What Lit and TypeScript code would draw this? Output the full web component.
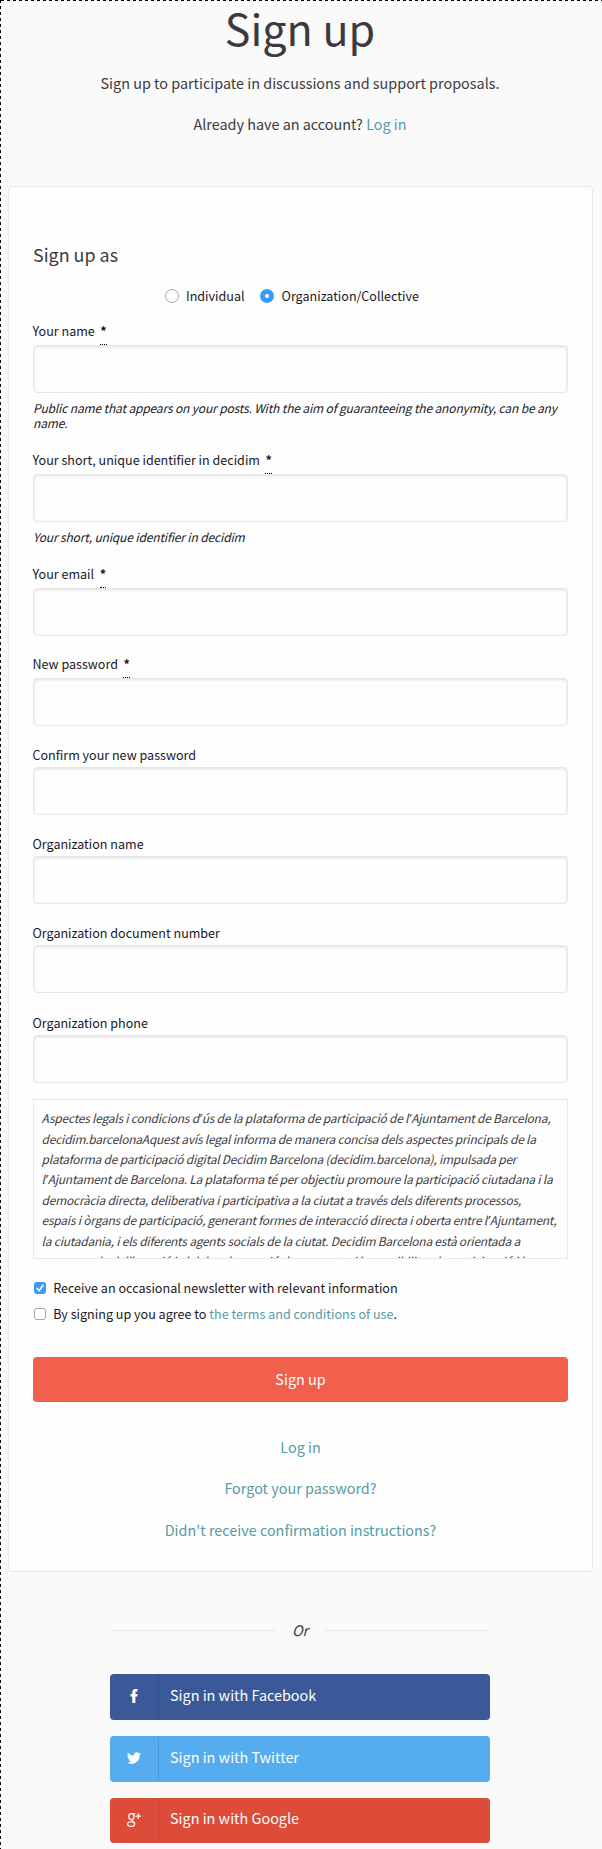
import { LitElement, html, css, svg } from "lit";
import { customElement, property } from "lit/decorators.js";

const base = css`
  * { box-sizing: border-box; }
  a { color: #569ba5; text-decoration: none; }
`;

@customElement("text-field")
class TextField extends LitElement {
  @property() label = "";
  @property({ type: Boolean }) required = false;
  @property() help = "";
  static styles = [base, css`
    :host { display: block; }
    .label { display: flex; gap: 5.5px; height: 24px; margin-left: -.5px; font-size: 12.56px; line-height: 23px; color: #1a181d; white-space: pre; }
    .required .label { height: 26px; line-height: 24px; }
    .star { font-weight: 700; height: 26px; border-bottom: 1px dotted #000; }
    .box { display: block; width: 100%; height: 48px; margin: 0; border: 1px solid #e8e8e8; border-radius: 4px; background: #fefefe; box-shadow: inset 0 1px 3px rgba(10,10,10,.13); outline: none; }
    .help { padding: 7px 0 2px; font-size: 12px; letter-spacing: -.15px; line-height: 15px; font-style: italic; color: #1a181d; white-space: pre-line; }
  `];
  render() {
    return html`<div class=${this.required ? "required" : ""}>
      <label class="label"><span>${this.label}</span>${this.required ? html`<span class="star">*</span>` : ""}</label>
      <input class="box" />
      ${this.help ? html`<div class="help">${this.help}</div>` : ""}
    </div>`;
  }
}

const facebook = svg`<path d="M6 16V8.600H4V5.800h2V4C6 1.300 7.300 0 9.700 0H12v2.800h-1.300c-.9 0-1.100.4-1.100 1.100v1.900H12l-.3 2.800H9.600V16z"/>`;
const twitter = svg`<path d="M16 3a6.600 6.600 0 0 1-1.900.500A3.300 3.300 0 0 0 15.500 1.700a6.600 6.600 0 0 1-2.100.8A3.300 3.300 0 0 0 7.800 5.500 9.300 9.300 0 0 1 1.100 2.100a3.300 3.300 0 0 0 1 4.400 3.300 3.300 0 0 1-1.500-.4c0 1.600 1.100 2.900 2.600 3.200a3.300 3.300 0 0 1-1.500.1 3.300 3.300 0 0 0 3.100 2.300A6.600 6.600 0 0 1 0 13.100 9.300 9.300 0 0 0 14.400 4.700 6.600 6.600 0 0 0 16 3z"/>`;
const google = svg`<g fill="none" stroke="#fefefe" stroke-width="1.400"><ellipse cx="5" cy="4.100" rx="3" ry="3.400"/><ellipse cx="4.700" cy="12.700" rx="4" ry="2.700"/><path d="M5.500.7H9.400M5.600 7.400C3.800 8.800 8.700 9.200 8.700 12.300"/><path d="M9.700 3.600H16M12.850.4V6.800"/></g>`;

const TERMS = `Aspectes legals i condicions d’ús de la plataforma de participació de l’Ajuntament de Barcelona,
decidim.barcelonaAquest avís legal informa de manera concisa dels aspectes principals de la
plataforma de participació digital Decidim Barcelona (decidim.barcelona), impulsada per
l’Ajuntament de Barcelona. La plataforma té per objectiu promoure la participació ciutadana i la
democràcia directa, deliberativa i participativa a la ciutat a través dels diferents processos,
espais i òrgans de participació, generant formes de interacció directa i oberta entre l’Ajuntament,
la ciutadania, i els diferents agents socials de la ciutat. Decidim Barcelona està orientada a
promoure la deliberació i el debat, la creació de propostes i la possibilitat de participació i la`;

@customElement("app-root")
class AppRoot extends LitElement {
  static styles = [base, css`
    :host { display: block; font-family: "Noto Sans CJK SC", "Noto Sans", sans-serif; }
    .page {
      height: 1849px; padding: 1px 0 0 1px; color: #3d393c;
      background:
        repeating-linear-gradient(90deg, #000 0 3px, transparent 3px 6px) 1px 0 / 100% 1px no-repeat,
        repeating-linear-gradient(180deg, #000 0 3px, transparent 3px 6px) 0 0 / 1px 100% no-repeat,
        #fafafa;
    }
    .head { height: 185px; text-align: center; font-size: 14.4px; line-height: 24px; padding: 1px 3px 0 0; }
    h1 { margin: 0; font-size: 43px; font-weight: 400; line-height: 51px; }
    .lead { margin-top: 18px; }
    .lead2 { margin-top: 17px; }
    .card { height: 1386px; margin: 0 9px 0 7px; padding: 0 24px; border: 1px solid #e8e8e8; border-radius: 4px; background: #fefefe; }
    h2 { margin: 0; padding-top: 51px; font-size: 17.9px; font-weight: 400; line-height: 32px; }
    .radios { display: flex; margin: 14px 0 0 132px; height: 24px; align-items: center; font-size: 12.56px; color: #1a181d; line-height: 24px; }
    .radio { width: 14px; height: 14px; border-radius: 50%; border: 1px solid #a8a8a8; background: #fff; margin-right: 7px; }
    .on { border: 5px solid #3b99fc; margin: 0 8px 0 15px; }
    .fields { margin-top: 10.6px; }
    text-field + text-field { margin-top: 17.3px; }
    text-field + text-field[required] { margin-top: 16px; }
    .terms { height: 160px; margin-top: 16.4px; padding: 8px 7.6px; border: 1px solid #e8e8e8; overflow: hidden; font-size: 11.9px; letter-spacing: -.19px; font-style: italic; line-height: 20.4px; white-space: pre; }
    .apos { font-family: "Noto Sans", sans-serif; line-height: 1; margin: 0 .5px; }
    .checks { padding-top: 15.4px; }
    .check { display: flex; align-items: center; height: 26px; font-size: 12.58px; color: #1a181d; line-height: 26px; }
    .tick { width: 12px; height: 12px; margin: 0 7.2px 0 1px; border: 1px solid #a8a8a8; border-radius: 3px; background: #fff; }
    .ticked { border: 0; background: #3b99fc; }
    .tick svg { display: block; }
    .submit { display: block; width: 100%; height: 45px; margin-top: 30.6px; border: 0; border-radius: 4px; background: #f0604d; color: #fefefe; font: 14.4px/43px "Noto Sans CJK SC", sans-serif; padding: 0 0 2px; }
    .links { display: grid; margin-top: 24px; grid-template-rows: 41px 42px 41px; text-align: center; font-size: 14.4px; line-height: 41px; }
    .or { display: flex; align-items: center; width: 380px; height: 24px; margin: 46px 0 0 109px; gap: 16px; font-size: 14.4px; font-style: italic; line-height: 24px; }
    .or i { flex: 1; height: 1px; background: #e8e8e8; }
    .social { display: grid; gap: 16px; width: 380px; margin: 32px 0 0 109px; }
    .btn { display: flex; height: 46px; border-radius: 4px; color: #fefefe; font-size: 14.4px; line-height: 42px; }
    .btn.fb { background: #3b5998; }
    .btn.tw { background: #55acee; }
    .btn.gg { background: #dd4b39; height: 45px; line-height: 40px; }
    .icon { width: 49px; margin: 1px 11px 1px 0; padding-bottom: 2px; border-right: 1px solid rgba(0,0,0,.1); display: grid; place-items: center; }
    .icon svg { display: block; fill: #fefefe; }
  `];
  render() {
    const social = (cls: string, name: string, icon: unknown) => html`<a class="btn ${cls}"><span class="icon"><svg width="14" height="14" viewBox="0 0 16 16">${icon}</svg></span><span>Sign in with ${name}</span></a>`;
    const terms = TERMS.split("’").map((part, i) => html`${i ? html`<span class="apos">’</span>` : ""}${part}`);
    return html`<div class="page">
      <header class="head"><h1>Sign up</h1>
        <div class="lead">Sign up to participate in discussions and support proposals.</div>
        <div class="lead2">Already have an account? <a>Log in</a></div></header>
      <main class="card">
        <h2>Sign up as</h2>
        <div class="radios"><span class="radio"></span>Individual<span class="radio on"></span>Organization/Collective</div>
        <div class="fields">
          <text-field required label="Your name" help="Public name that appears on your posts. With the aim of guaranteeing the anonymity, can be any\nname."></text-field>
          <text-field required label="Your short, unique identifier in decidim" help="Your short, unique identifier in decidim"></text-field>
          <text-field required label="Your email"></text-field>
          <text-field required label="New password"></text-field>
          <text-field label="Confirm your new password"></text-field>
          <text-field label="Organization name"></text-field>
          <text-field label="Organization document number"></text-field>
          <text-field label="Organization phone"></text-field>
        </div>
        <div class="terms">${terms}</div>
        <div class="checks"><div class="check"><span class="tick ticked"><svg width="12" height="12" viewBox="0 0 12 12"><path d="M3 6.300 5.100 8.700 9 3.200" fill="none" stroke="#fff" stroke-width="1.600" stroke-linecap="round" stroke-linejoin="round"/></svg></span>Receive an occasional newsletter with relevant information</div>
        <div class="check"><span class="tick"></span><span>By signing up you agree to <a>the terms and conditions of use</a>.</span></div></div>
        <button class="submit">Sign up</button>
        <nav class="links"><a>Log in</a><a>Forgot your password?</a><a>Didn't receive confirmation instructions?</a></nav>
      </main>
      <div class="or"><i></i><span>Or</span><i></i></div>
      <div class="social">${social("fb", "Facebook", facebook)}${social("tw", "Twitter", twitter)}${social("gg", "Google", google)}</div>
    </div>`;
  }
}
